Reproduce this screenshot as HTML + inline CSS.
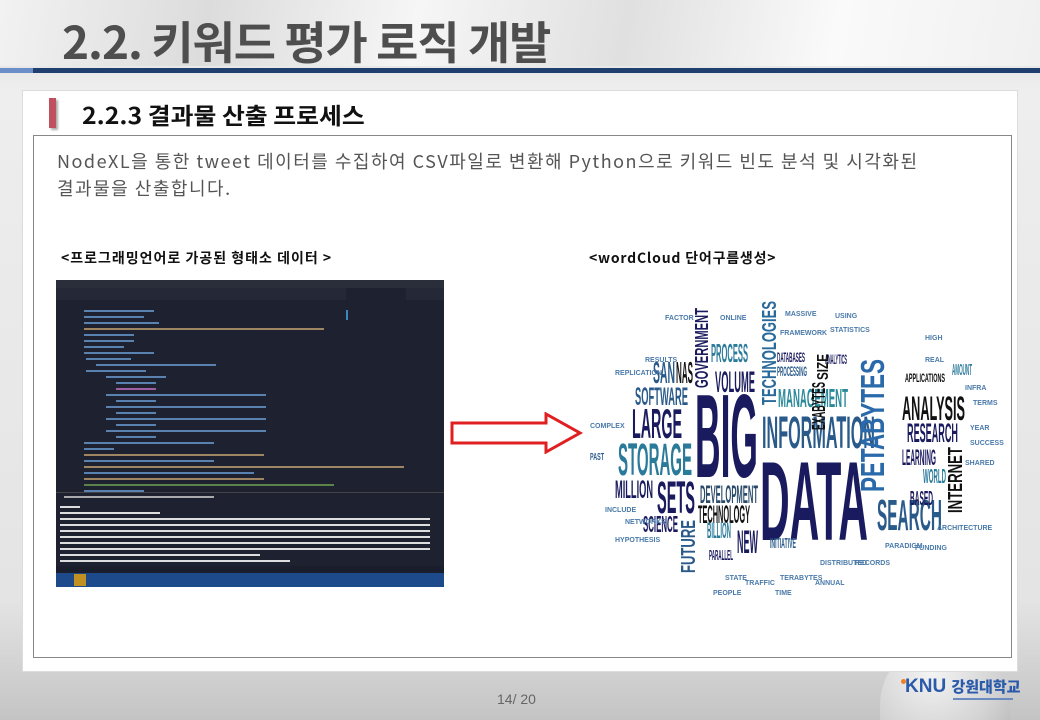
<!DOCTYPE html>
<html style="width:1040px;height:720px;overflow:hidden"><head><meta charset="utf-8"><style>
*{margin:0;padding:0;box-sizing:border-box}
body{width:1040px;height:720px;overflow:hidden;position:relative;font-family:"Liberation Sans","Noto Sans CJK KR",sans-serif;
background:linear-gradient(180deg,#f4f4f4 0,#e6e6e6 60px,#eeeeee 90px,#e4e4e4 600px,#c4c4c4 720px)}
.abs{position:absolute}
</style></head><body>
<div class="abs" style="left:0;top:0;width:1040px;height:66px;background:linear-gradient(100deg,#f2f2f2 0,#dcdcdc 20%,#f6f6f6 40%,#e0e0e0 60%,#fafafa 80%,#f0f0f0 100%)"></div>
<div class="abs" style="left:62px;top:10px;font-family:'Noto Sans CJK KR',sans-serif;font-weight:700;font-size:45px;color:#4e4e4e;transform:scaleX(1.02);transform-origin:left top;white-space:nowrap;line-height:60px;letter-spacing:-1px">2.2. 키워드 평가 로직 개발</div>
<div class="abs" style="left:0;top:68px;width:33px;height:5px;background:#6a8fc8"></div>
<div class="abs" style="left:33px;top:68px;width:1007px;height:5px;background:#1f3f6e"></div>
<div class="abs" style="left:880px;top:640px;width:130px;height:80px;border-radius:65px 65px 0 0;background:radial-gradient(circle at 40% 40%,#f4f4f4,#d4d4d4 70%,#c0c0c0)"></div>
<div class="abs" style="left:22px;top:90px;width:996px;height:582px;background:#fff;border:1px solid #dcdcdc"></div>
<div class="abs" style="left:49px;top:98px;width:7px;height:30px;background:#c0505e;box-shadow:2px 2px 2px #aaa"></div>
<div class="abs" style="left:82px;top:98px;font-family:'Noto Sans CJK KR',sans-serif;font-weight:700;font-size:23px;color:#111;line-height:32px;transform:scaleX(1.08);transform-origin:left top;white-space:nowrap">2.2.3 결과물 산출 프로세스</div>
<div class="abs" style="left:33px;top:135px;width:979px;height:523px;border:1px solid #888;background:#fff"></div>
<div class="abs" style="left:57px;top:148px;font-size:18px;color:#555;line-height:27px;font-family:'Noto Sans CJK KR',sans-serif;font-weight:400;white-space:nowrap;letter-spacing:1.5px">NodeXL을 통한 tweet 데이터를 수집하여 CSV파일로 변환해 Python으로 키워드 빈도 분석 및 시각화된<br>결과물을 산출합니다.</div>
<div class="abs" style="left:61px;top:248px;font-size:14px;font-weight:700;color:#111;font-family:'Noto Sans CJK KR',sans-serif;white-space:nowrap;letter-spacing:1px">&lt;프로그래밍언어로 가공된 형태소 데이터 &gt;</div>
<div class="abs" style="left:589px;top:248px;font-size:14px;font-weight:700;color:#111;font-family:'Noto Sans CJK KR',sans-serif;white-space:nowrap;letter-spacing:0.8px">&lt;wordCloud 단어구름생성&gt;</div>
<svg class="abs" style="left:56px;top:280px" width="388" height="307">
<rect width="388" height="307" fill="#1e2230"/>
<rect width="388" height="8" fill="#2a2d3a"/>
<rect y="8" width="388" height="12" fill="#252836"/>
<rect x="290" y="8" width="60" height="12" fill="#1e2230"/>
<g fill="#6a9bd0" opacity="0.8">
<rect x="28" y="30" width="70" height="2"/><rect x="28" y="36" width="60" height="2"/><rect x="28" y="42" width="75" height="2"/>
<rect x="28" y="48" width="240" height="2" fill="#c0a070"/><rect x="28" y="54" width="50" height="2"/><rect x="28" y="60" width="50" height="2"/>
<rect x="28" y="66" width="40" height="2"/><rect x="28" y="72" width="70" height="2"/><rect x="30" y="78" width="45" height="2"/>
<rect x="40" y="84" width="120" height="2"/><rect x="30" y="90" width="60" height="2"/><rect x="50" y="96" width="60" height="2"/>
<rect x="60" y="102" width="40" height="2"/><rect x="60" y="108" width="40" height="2" fill="#c070c0"/><rect x="50" y="114" width="160" height="2"/>
<rect x="60" y="120" width="40" height="2"/><rect x="50" y="126" width="160" height="2"/><rect x="60" y="132" width="40" height="2"/>
<rect x="50" y="138" width="160" height="2"/><rect x="60" y="144" width="40" height="2"/><rect x="50" y="150" width="160" height="2"/>
<rect x="60" y="156" width="40" height="2"/><rect x="28" y="162" width="130" height="2"/><rect x="28" y="168" width="30" height="2"/>
<rect x="28" y="174" width="180" height="2" fill="#c0a070"/><rect x="28" y="180" width="130" height="2"/><rect x="28" y="186" width="320" height="2" fill="#c0a070"/>
<rect x="28" y="192" width="170" height="2"/><rect x="28" y="198" width="180" height="2" fill="#c0a070"/><rect x="28" y="204" width="250" height="2" fill="#6a9a50"/>
<rect x="28" y="210" width="60" height="2"/>
</g>
<rect x="290" y="30" width="2" height="10" fill="#3a8ac0"/>
<rect x="0" y="212" width="388" height="1" fill="#444"/>
<g fill="#aaa"><rect x="8" y="216" width="150" height="2"/></g>
<g fill="#ddd">
<rect x="4" y="226" width="20" height="2"/><rect x="4" y="232" width="100" height="2"/>
<rect x="4" y="238" width="370" height="2"/><rect x="4" y="244" width="370" height="2"/><rect x="4" y="250" width="370" height="2"/>
<rect x="4" y="256" width="370" height="2"/><rect x="4" y="262" width="370" height="2"/><rect x="4" y="268" width="370" height="2"/>
<rect x="4" y="274" width="200" height="2"/><rect x="4" y="280" width="230" height="2"/>
</g>
<rect y="286" width="388" height="7" fill="#1a1e2c"/>
<rect y="293" width="388" height="14" fill="#1c4a8a"/>
<rect x="18" y="294" width="12" height="12" fill="#c09020"/>
</svg>
<svg class="abs" style="left:450px;top:412px" width="134" height="42"><path d="M2 11 H96 V2 L130 21 L96 40 V31 H2 Z" fill="#fff" stroke="#e02020" stroke-width="3"/></svg>
<svg class="abs" style="left:585px;top:280px" width="419" height="343" font-family="Liberation Sans, sans-serif" font-weight="bold">
<rect width="419" height="343" fill="#fff"/>
<text x="110" y="197" font-size="119" textLength="63" lengthAdjust="spacingAndGlyphs" fill="#1a1a5e">BIG</text>
<text x="175" y="260" font-size="112" textLength="108" lengthAdjust="spacingAndGlyphs" fill="#1a1a5e">DATA</text>
<text x="177" y="168" font-size="45" textLength="113" lengthAdjust="spacingAndGlyphs" fill="#2a5a8a">INFORMATION</text>
<text x="47" y="158" font-size="42" textLength="50" lengthAdjust="spacingAndGlyphs" fill="#1a1a5e">LARGE</text>
<text x="33" y="195" font-size="45" textLength="74" lengthAdjust="spacingAndGlyphs" fill="#2a7a9a">STORAGE</text>
<text x="292" y="250" font-size="44" textLength="65" lengthAdjust="spacingAndGlyphs" fill="#2a5a8a">SEARCH</text>
<text x="317" y="140" font-size="34" textLength="63" lengthAdjust="spacingAndGlyphs" fill="#111">ANALYSIS</text>
<text x="193" y="127" font-size="26" textLength="70" lengthAdjust="spacingAndGlyphs" fill="#2a8a9a">MANAGEMENT</text>
<text x="72" y="233" font-size="45" textLength="38" lengthAdjust="spacingAndGlyphs" fill="#1a1a5e">SETS</text>
<text x="30" y="218" font-size="25" textLength="38" lengthAdjust="spacingAndGlyphs" fill="#1a1a5e">MILLION</text>
<text x="115" y="223" font-size="25" textLength="58" lengthAdjust="spacingAndGlyphs" fill="#2a4a6a">DEVELOPMENT</text>
<text x="113" y="243" font-size="25" textLength="52" lengthAdjust="spacingAndGlyphs" fill="#111">TECHNOLOGY</text>
<text x="130" y="112" font-size="30" textLength="40" lengthAdjust="spacingAndGlyphs" fill="#1a1a5e">VOLUME</text>
<text x="50" y="125" font-size="25" textLength="53" lengthAdjust="spacingAndGlyphs" fill="#2a5a8a">SOFTWARE</text>
<text x="322" y="162" font-size="27" textLength="51" lengthAdjust="spacingAndGlyphs" fill="#1a1a5e">RESEARCH</text>
<text x="126" y="82" font-size="26" textLength="37" lengthAdjust="spacingAndGlyphs" fill="#2a7a9a">PROCESS</text>
<text x="68" y="103" font-size="31" textLength="22" lengthAdjust="spacingAndGlyphs" fill="#2a5a8a">SAN</text>
<text x="91" y="103" font-size="31" textLength="17" lengthAdjust="spacingAndGlyphs" fill="#111">NAS</text>
<text x="58" y="252" font-size="23" textLength="35" lengthAdjust="spacingAndGlyphs" fill="#1a1a5e">SCIENCE</text>
<text x="152" y="273" font-size="32" textLength="21" lengthAdjust="spacingAndGlyphs" fill="#1a1a5e">NEW</text>
<text x="122" y="258" font-size="22" textLength="24" lengthAdjust="spacingAndGlyphs" fill="#2a7a9a">BILLION</text>
<text x="317" y="185" font-size="22" textLength="34" lengthAdjust="spacingAndGlyphs" fill="#1a1a5e">LEARNING</text>
<text x="338" y="203" font-size="20" textLength="23" lengthAdjust="spacingAndGlyphs" fill="#2a7a9a">WORLD</text>
<text x="325" y="225" font-size="20" textLength="23" lengthAdjust="spacingAndGlyphs" fill="#1a1a5e">BASED</text>
<text x="192" y="82" font-size="14" textLength="28" lengthAdjust="spacingAndGlyphs" fill="#1a1a5e">DATABASES</text>
<text x="192" y="96" font-size="14" textLength="30" lengthAdjust="spacingAndGlyphs" fill="#2a5a8a">PROCESSING</text>
<text x="240" y="84" font-size="14" textLength="22" lengthAdjust="spacingAndGlyphs" fill="#1a1a5e">ANALYTICS</text>
<text x="367" y="95" font-size="16" textLength="20" lengthAdjust="spacingAndGlyphs" fill="#2a7a9a">AMOUNT</text>
<text x="320" y="102" font-size="12" textLength="40" lengthAdjust="spacingAndGlyphs" fill="#111">APPLICATIONS</text>
<text x="185" y="268" font-size="15" textLength="26" lengthAdjust="spacingAndGlyphs" fill="#2a5a8a">INITIATIVE</text>
<text x="124" y="280" font-size="15" textLength="24" lengthAdjust="spacingAndGlyphs" fill="#1a1a5e">PARALLEL</text>
<text x="5" y="180" font-size="10" textLength="14" lengthAdjust="spacingAndGlyphs" fill="#2a5a8a">PAST</text>
<g transform="translate(299,212) rotate(-90)"><text x="0" y="0" font-size="33" textLength="133" lengthAdjust="spacingAndGlyphs" fill="#2a6aaa">PETABYTES</text></g>
<g transform="translate(191,125) rotate(-90)"><text x="0" y="0" font-size="20" textLength="104" lengthAdjust="spacingAndGlyphs" fill="#2a6a9a">TECHNOLOGIES</text></g>
<g transform="translate(377,233) rotate(-90)"><text x="0" y="0" font-size="20" textLength="66" lengthAdjust="spacingAndGlyphs" fill="#111">INTERNET</text></g>
<g transform="translate(110,293) rotate(-90)"><text x="0" y="0" font-size="20" textLength="53" lengthAdjust="spacingAndGlyphs" fill="#2a5a8a">FUTURE</text></g>
<g transform="translate(123,108) rotate(-90)"><text x="0" y="0" font-size="18" textLength="80" lengthAdjust="spacingAndGlyphs" fill="#1a1a5e">GOVERNMENT</text></g>
<g transform="translate(240,150) rotate(-90)"><text x="0" y="0" font-size="18" textLength="48" lengthAdjust="spacingAndGlyphs" fill="#111">EXABYTES</text></g>
<g transform="translate(243,100) rotate(-90)"><text x="0" y="0" font-size="16" textLength="26" lengthAdjust="spacingAndGlyphs" fill="#111">SIZE</text></g>
<g fill="#4a7aaa" font-size="7">
<text x="80" y="40">FACTOR</text><text x="135" y="40">ONLINE</text><text x="200" y="36">MASSIVE</text><text x="250" y="38">USING</text>
<text x="195" y="55">FRAMEWORK</text><text x="245" y="52">STATISTICS</text><text x="60" y="82">RESULTS</text><text x="340" y="60">HIGH</text>
<text x="30" y="95">REPLICATION</text><text x="340" y="82">REAL</text><text x="380" y="110">INFRA</text><text x="388" y="125">TERMS</text>
<text x="5" y="148">COMPLEX</text><text x="385" y="150">YEAR</text><text x="385" y="165">SUCCESS</text><text x="380" y="185">SHARED</text>
<text x="20" y="232">INCLUDE</text><text x="40" y="244">NETWORKS</text><text x="30" y="262">HYPOTHESIS</text><text x="352" y="250">ARCHITECTURE</text>
<text x="300" y="268">PARADIGM</text><text x="330" y="270">FUNDING</text><text x="270" y="285">RECORDS</text><text x="235" y="285">DISTRIBUTED</text>
<text x="140" y="300">STATE</text><text x="160" y="305">TRAFFIC</text><text x="195" y="300">TERABYTES</text><text x="230" y="305">ANNUAL</text><text x="128" y="315">PEOPLE</text><text x="190" y="315">TIME</text>
</g>
</svg>
<div class="abs" style="left:497px;top:691px;font-size:14px;color:#666">14/ 20</div>
<div class="abs" style="left:905px;top:676px;font-family:'Liberation Sans',sans-serif;font-weight:900;font-size:19px;color:#2a5aaa;white-space:nowrap">KNU <span style="font-family:'Noto Sans CJK KR',sans-serif;font-size:15px">강원대학교</span></div>
<div class="abs" style="left:901px;top:679px;width:5px;height:5px;border-radius:50%;background:#f08020"></div>
<div class="abs" style="left:953px;top:698px;width:60px;height:2px;background:#6a8ac0"></div>
</body></html>
